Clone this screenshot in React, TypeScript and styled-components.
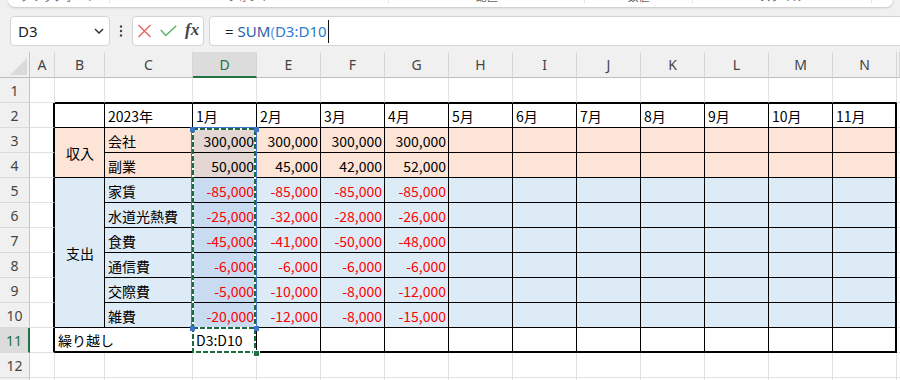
import React from 'react';
import styled, { createGlobalStyle } from 'styled-components';

const GlobalStyle = createGlobalStyle`
  html, body { margin: 0; padding: 0; background: #fff; overflow: hidden; }
  #root { width: 900px; height: 380px; }
`;

const GRID = '#e1e1e1';
const PEACH = '#fce4d6';
const BLUE = '#ddebf7';
const PEACH_SEL = '#e4d6d3';
const BLUE_SEL = '#c9dbf0';
const GREEN = '#217346';

const Page = styled.div`
  width: 900px;
  height: 380px;
  overflow: hidden;
  background: #f0f0f0;
  font-family: "Noto Sans", "Noto Sans CJK JP", sans-serif;
`;

const TopArea = styled.div`
  height: 52px;
  display: flex;
  flex-direction: column;
  background: #f0f0f0;
`;

const Ribbon = styled.div`
  height: 7px;
  margin: 0 7px 0 8px;
  background: #fff;
  border-radius: 0 0 7px 7px;
  box-shadow: 0 1px 2px rgba(0, 0, 0, 0.18);
  overflow: hidden;
`;

const RibbonInner = styled.div`
  display: flex;
  height: 14px;
  margin-top: -11px;
  font-family: "Noto Sans CJK JP", sans-serif;
  font-size: 11px;
  line-height: 14px;
  color: #666;
`;

const RibbonGroup = styled.div<{ $w: number }>`
  width: ${p => p.$w}px;
  display: flex;
  justify-content: center;
  white-space: nowrap;
  border-right: 1px solid #e4e4e4;
`;

const FormulaRow = styled.div`
  margin-top: 9px;
  height: 30px;
  display: flex;
  padding-left: 10px;
`;

const NameBox = styled.div`
  width: 100px;
  box-sizing: border-box;
  background: #fff;
  border: 1px solid #d4d4d4;
  border-radius: 4px;
  display: flex;
  align-items: center;
  justify-content: space-between;
  padding: 0 5px 0 7px;
  font-size: 15px;
  color: #222;
`;

const Dots = styled.div`
  width: 22px;
  display: flex;
  align-items: center;
  justify-content: center;
`;

const FxBox = styled.div`
  width: 72px;
  box-sizing: border-box;
  background: #fff;
  border: 1px solid #d4d4d4;
  border-radius: 4px;
  display: flex;
  align-items: center;
  padding-left: 4px;
  gap: 8px;
`;

const FxText = styled.span`
  font-family: "Liberation Serif", "DejaVu Serif", serif;
  font-style: italic;
  font-weight: bold;
  font-size: 17px;
  color: #444;
  margin-top: -2px;
`;

const FormulaInput = styled.div`
  flex: 1;
  margin-left: 5px;
  margin-right: -8px;
  box-sizing: border-box;
  background: #fff;
  border: 1px solid #d4d4d4;
  border-radius: 4px;
  display: flex;
  align-items: center;
  padding-left: 15px;
  font-size: 15px;
  color: #222;
`;

const Eq = styled.span`
  margin-right: 4px;
  color: #222;
`;

const Fn = styled.span`
  color: #2b5fa8;
`;

const Paren = styled.span`
  color: #6aa3dc;
`;

const Ref = styled.span`
  color: #2b7bd0;
`;

const Caret = styled.span`
  display: inline-block;
  width: 1px;
  height: 23px;
  background: #111;
  margin-left: 1px;
`;

const Sheet = styled.div`
  position: relative;
  background: #fff;
  height: 328px;
  overflow: hidden;
`;

const Grid = styled.div`
  display: grid;
  grid-template-columns: 30px 25px 50px 88px repeat(11, 64px) 3px;
  grid-template-rows: 26px repeat(13, 25px);
`;

const Corner = styled.div`
  grid-column: 1;
  grid-row: 1;
  box-sizing: border-box;
  background: #f0f0f0;
  border-right: 1px solid #c4c4c4;
  border-bottom: 1px solid #bdbdbd;
  display: flex;
  justify-content: flex-end;
  align-items: flex-end;
  padding: 0 2px 2px 0;
`;

const Triangle = styled.div`
  width: 17px;
  height: 17px;
  background: #dadada;
  clip-path: polygon(100% 0, 100% 100%, 0 100%);
`;

const ColHead = styled.div<{ $col: number; $sel?: boolean }>`
  grid-column: ${p => p.$col};
  grid-row: 1;
  box-sizing: border-box;
  background: ${p => (p.$sel ? '#dcdcdc' : '#f0f0f0')};
  border-right: 1px solid #d6d6d6;
  border-bottom: ${p => (p.$sel ? `2px solid ${GREEN}` : '1px solid #bdbdbd')};
  display: flex;
  align-items: center;
  justify-content: center;
  padding-top: ${p => (p.$sel ? '1px' : '0')};
  font-size: 14px;
  color: ${p => (p.$sel ? GREEN : '#444')};
`;

const RowHead = styled.div<{ $row: number; $sel?: boolean }>`
  grid-column: 1;
  grid-row: ${p => p.$row};
  box-sizing: border-box;
  background: ${p => (p.$sel ? '#dcdcdc' : '#f0f0f0')};
  border-right: ${p => (p.$sel ? `2px solid ${GREEN}` : '1px solid #c4c4c4')};
  border-bottom: 1px solid #dadada;
  display: flex;
  align-items: center;
  justify-content: center;
  font-size: 14px;
  color: ${p => (p.$sel ? GREEN : '#444')};
`;

const Cell = styled.div<{
  $col: number;
  $row: number;
  $cs: number;
  $rs: number;
  $bg: string;
  $br: string;
  $bb: string;
  $bt: string;
  $align: string;
  $fg: string;
}>`
  grid-column: ${p => `${p.$col} / span ${p.$cs}`};
  grid-row: ${p => `${p.$row} / span ${p.$rs}`};
  box-sizing: border-box;
  min-width: 0;
  background: ${p => p.$bg};
  border-right: ${p => p.$br};
  border-bottom: ${p => p.$bb};
  border-top: ${p => p.$bt};
  display: flex;
  align-items: center;
  justify-content: ${p => p.$align};
  padding: 1px 2px 0 3px;
  font-family: "Noto Sans CJK JP", sans-serif;
  font-size: 14px;
  color: ${p => p.$fg};
  white-space: nowrap;
  overflow: hidden;
`;

const Overlay = styled.svg`
  position: absolute;
  left: 0;
  top: 0;
  pointer-events: none;
`;

const COLS = ['A', 'B', 'C', 'D', 'E', 'F', 'G', 'H', 'I', 'J', 'K', 'L', 'M', 'N'];

const DATA: Record<number, { label: string; vals: number[] }> = {
  3: { label: '会社', vals: [300000, 300000, 300000, 300000] },
  4: { label: '副業', vals: [50000, 45000, 42000, 52000] },
  5: { label: '家賃', vals: [-85000, -85000, -85000, -85000] },
  6: { label: '水道光熱費', vals: [-25000, -32000, -28000, -26000] },
  7: { label: '食費', vals: [-45000, -41000, -50000, -48000] },
  8: { label: '通信費', vals: [-6000, -6000, -6000, -6000] },
  9: { label: '交際費', vals: [-5000, -10000, -8000, -12000] },
  10: { label: '雑費', vals: [-20000, -12000, -8000, -15000] },
};

type CellDef = {
  key: string;
  col: number;
  row: number;
  cs: number;
  rs: number;
  bg: string;
  br: string;
  bb: string;
  bt: string;
  align: string;
  fg: string;
  text: string;
};

function buildCells(): CellDef[] {
  const out: CellDef[] = [];
  const covered = (r: number, c: number) =>
    (c === 2 && r === 4) || (c === 2 && r >= 6 && r <= 10) || (c === 3 && r === 11);
  for (let r = 1; r <= 13; r++) {
    for (let c = 1; c <= 15; c++) {
      if (covered(r, c)) continue;
      const inTable = r >= 2 && r <= 11 && c >= 2 && c <= 14;
      let bg = '#fff';
      if (c >= 2 && c <= 14 && (r === 3 || r === 4)) bg = c === 4 ? PEACH_SEL : PEACH;
      if (c >= 2 && c <= 14 && r >= 5 && r <= 10) bg = c === 4 ? BLUE_SEL : BLUE;
      let br = `1px solid ${GRID}`;
      let bb = `1px solid ${GRID}`;
      let bt = 'none';
      if (inTable) {
        br = c === 14 ? '2px solid #000' : '1px solid #000';
        bb = r === 11 ? '2px solid #000' : '1px solid #000';
        if (r === 2) bt = '1px solid #000';
      } else {
        if (c === 1 && r >= 2 && r <= 11) br = '2px solid #000';
        if (r === 1 && c >= 2 && c <= 14) bb = '1px solid #000';
      }
      if (c === 15) br = 'none';
      let cs = 1;
      let rs = 1;
      let text = '';
      let align = 'flex-start';
      let fg = '#000';
      if (c === 2 && r === 3) { rs = 2; text = '収入'; align = 'center'; }
      if (c === 2 && r === 5) { rs = 6; text = '支出'; align = 'center'; }
      if (c === 2 && r === 11) { cs = 2; text = '繰り越し'; }
      if (r === 2 && c === 3) text = '2023年';
      if (r === 2 && c >= 4 && c <= 14) text = `${c - 3}月`;
      if (DATA[r] && c === 3) text = DATA[r].label;
      if (DATA[r] && c >= 4 && c <= 7) {
        const v = DATA[r].vals[c - 4];
        text = v.toLocaleString('en-US');
        align = 'flex-end';
        fg = v < 0 ? '#ff0000' : '#000';
      }
      if (r === 11 && c === 4) text = 'D3:D10';
      out.push({ key: `${r}-${c}`, col: c + 1, row: r + 1, cs, rs, bg, br, bb, bt, align, fg, text });
    }
  }
  return out;
}

const CELLS = buildCells();

const RIBBON = [
  { w: 102, label: 'クリップボード' },
  { w: 280, label: 'フォント' },
  { w: 197, label: '配置' },
  { w: 107, label: '数値' },
  { w: 180, label: 'スタイル' },
  { w: 20, label: '' },
];

export default function App() {
  return (
    <Page>
      <GlobalStyle />
      <TopArea>
        <Ribbon>
          <RibbonInner>
            {RIBBON.map((g, i) => (
              <RibbonGroup key={i} $w={g.w}>{g.label}</RibbonGroup>
            ))}
          </RibbonInner>
        </Ribbon>
        <FormulaRow>
          <NameBox>
            <span>D3</span>
            <svg width="10" height="6" viewBox="0 0 10 6">
              <path d="M1 1 L5 5 L9 1" fill="none" stroke="#333" strokeWidth="1.5" />
            </svg>
          </NameBox>
          <Dots>
            <svg width="4" height="12" viewBox="0 0 4 12">
              <circle cx="2" cy="1.5" r="1.2" fill="#444" />
              <circle cx="2" cy="6" r="1.2" fill="#444" />
              <circle cx="2" cy="10.5" r="1.2" fill="#444" />
            </svg>
          </Dots>
          <FxBox>
            <svg width="15" height="14" viewBox="0 0 15 14">
              <path d="M1.5 1 L13.5 13 M13.5 1 L1.5 13" stroke="#e46a6a" strokeWidth="1.5" fill="none" />
            </svg>
            <svg width="17" height="12" viewBox="0 0 17 12">
              <path d="M0.8 5 L5.8 10.5 L16.2 0.8" stroke="#5cb36a" strokeWidth="1.5" fill="none" />
            </svg>
            <FxText>fx</FxText>
          </FxBox>
          <FormulaInput>
            <Eq>=</Eq>
            <Fn>SUM</Fn>
            <Paren>(</Paren>
            <Ref>D3:D10</Ref>
            <Caret />
          </FormulaInput>
        </FormulaRow>
      </TopArea>
      <Sheet>
        <Grid>
          <Corner>
            <Triangle />
          </Corner>
          {COLS.map((l, i) => (
            <ColHead key={l} $col={i + 2} $sel={l === 'D'}>{l}</ColHead>
          ))}
          <ColHead $col={16} />
          {Array.from({ length: 13 }, (_, i) => (
            <RowHead key={i} $row={i + 2} $sel={i + 1 === 11}>{i + 1}</RowHead>
          ))}
          {CELLS.map(c => (
            <Cell
              key={c.key}
              $col={c.col}
              $row={c.row}
              $cs={c.cs}
              $rs={c.rs}
              $bg={c.bg}
              $br={c.br}
              $bb={c.bb}
              $bt={c.bt}
              $align={c.align}
              $fg={c.fg}
            >
              {c.text}
            </Cell>
          ))}
        </Grid>
        <Overlay width="900" height="328" viewBox="0 0 900 328">
          <rect x="191.5" y="75.5" width="65" height="201" fill="none" stroke="#3f74c6" strokeWidth="1" />
          <rect x="193" y="77" width="62" height="199" fill="none" stroke="#fff" strokeWidth="2" />
          <rect x="193" y="77" width="62" height="199" fill="none" stroke="#1d6a3e" strokeWidth="2" strokeDasharray="5 2" />
          <rect x="193" y="276" width="62" height="24" fill="none" stroke="#fff" strokeWidth="2" />
          <rect x="193" y="276" width="62" height="24" fill="none" stroke="#1d6a3e" strokeWidth="2" strokeDasharray="5 2" />
          <rect x="190" y="75" width="5" height="5" fill="#3c74c8" />
          <rect x="254" y="75" width="5" height="5" fill="#3c74c8" />
          <rect x="190" y="274" width="5" height="5" fill="#3c74c8" />
          <rect x="254" y="274" width="5" height="5" fill="#3c74c8" />
          <rect x="253.5" y="298.5" width="6" height="6" fill={GREEN} stroke="#fff" strokeWidth="1" />
        </Overlay>
      </Sheet>
    </Page>
  );
}
